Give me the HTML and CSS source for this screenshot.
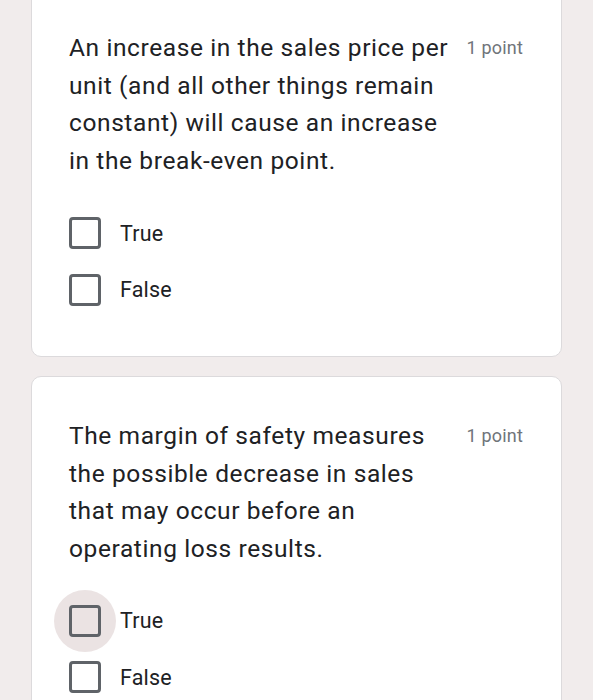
FILE: index.html
```html
<!DOCTYPE html>
<html>
<head>
<meta charset="utf-8">
<link rel="stylesheet" href="styles.css">
</head>
<body>
<div class="page">
  <div class="card first">
    <div class="head">
      <div class="question">An increase in the sales price per unit (and all other things remain constant) will cause an increase in the break-even point.</div>
      <div class="points">1 point</div>
    </div>
    <div class="options">
      <label class="option"><span class="box-wrap"><span class="box"></span></span><span class="label">True</span></label>
      <label class="option"><span class="box-wrap"><span class="box"></span></span><span class="label">False</span></label>
    </div>
  </div>
  <div class="card">
    <div class="head">
      <div class="question">The margin of safety measures the possible decrease in sales that may occur before an operating loss results.</div>
      <div class="points">1 point</div>
    </div>
    <div class="options">
      <label class="option"><span class="box-wrap focused"><span class="box"></span></span><span class="label">True</span></label>
      <label class="option"><span class="box-wrap"><span class="box"></span></span><span class="label">False</span></label>
    </div>
  </div>
</div>
</body>
</html>
```
FILE: styles.css
```css
html, body {
  margin: 0;
  padding: 0;
  background: #f1ecec;
  font-family: Roboto, "Noto Sans", sans-serif;
  color: #202124;
  overflow: hidden;
}
.page {
  display: flex;
  flex-direction: column;
  gap: 19px;
  padding-left: 31px;
  width: 531px;
}
.card {
  background: #fff;
  border: 1px solid #dcdadc;
  border-radius: 10px;
  padding: 40px 38px 38px 37px;
}
.card.first {
  margin-top: -12px;
}
.head {
  display: flex;
  align-items: flex-start;
}
.question {
  width: 382px;
  font-size: 24.5px;
  letter-spacing: 0.6px;
  line-height: 37.7px;
}
.points {
  margin-left: auto;
  font-size: 18px;
  letter-spacing: 0.2px;
  color: #70757a;
  line-height: 37.7px;
  white-space: nowrap;
}
.options {
  display: flex;
  flex-direction: column;
  margin-top: 25px;
}
.option {
  display: flex;
  align-items: center;
  height: 56.5px;
}
.box-wrap {
  width: 32px;
  height: 32px;
  position: relative;
  display: flex;
  align-items: center;
  justify-content: center;
}
.box-wrap.focused::before {
  content: "";
  position: absolute;
  left: -15px;
  top: -15px;
  width: 62px;
  height: 62px;
  border-radius: 50%;
  background: #ebe3e3;
}
.box {
  position: relative;
  box-sizing: border-box;
  width: 32px;
  height: 32px;
  border: 3px solid #5f6368;
  border-radius: 4px;
  background: transparent;
}
.label {
  margin-left: 19px;
  font-size: 21.5px;
  letter-spacing: 0.2px;
}
```
